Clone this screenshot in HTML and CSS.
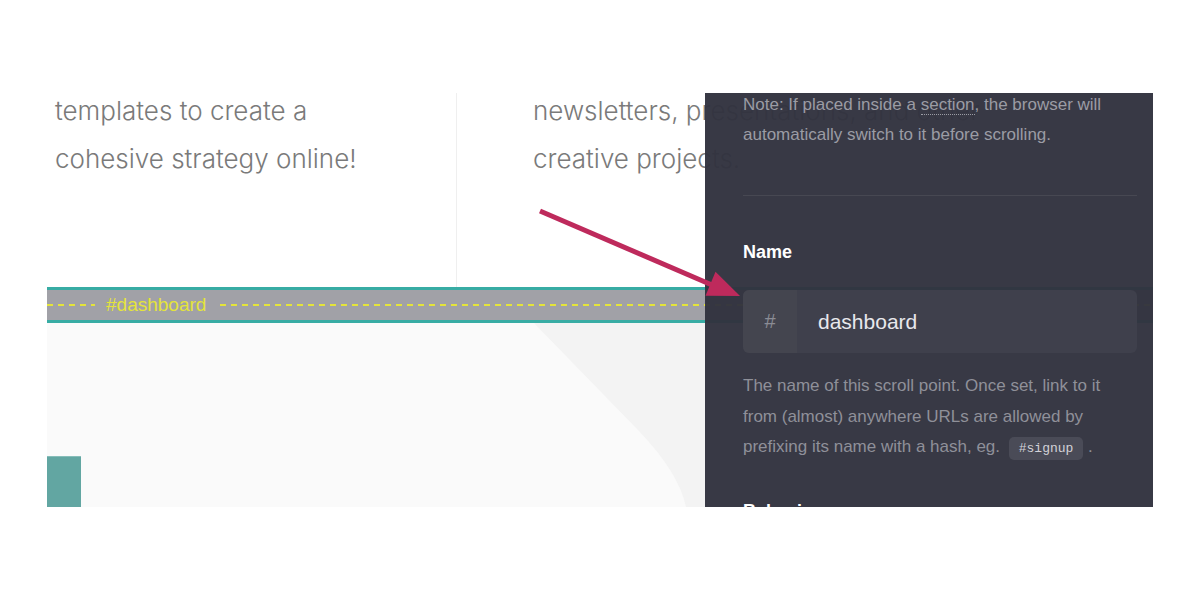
FILE: index.html
```html
<!DOCTYPE html>
<html lang="en">
<head>
  <meta charset="UTF-8" />
  <title>Scroll point settings</title>
  <link rel="stylesheet" href="styles.css">
</head>
<body>

  <div class="shot">
    <div class="preview">
      <div class="features">
        <div class="feature">
          <p>templates to create a<br>cohesive strategy online!</p>
        </div>
        <div class="feature">
          <p>newsletters, presentations, and other<br>creative projects.</p>
        </div>
      </div>

      <div class="scroll-point">
        <span class="dashes dashes-short"></span>
        <span class="scroll-label">#dashboard</span>
        <span class="dashes dashes-long"></span>
      </div>

      <div class="hero">
        <svg class="hero-shape" width="658" height="184" viewBox="0 0 658 184">
          <path d="M487 0 L592 108 Q632 150 639 184 L658 184 L658 0 Z" fill="#f3f3f3" />
        </svg>
        <div class="hero-tab"></div>
      </div>
    </div>

    <aside class="panel">
      <p class="note">Note: If placed inside a <span class="term">section</span>, the browser will automatically switch to it before scrolling.</p>

      <div class="divider"></div>

      <h3 class="field-label">Name</h3>
      <div class="input">
        <span class="input-prefix">#</span>
        <span class="input-value">dashboard</span>
      </div>
      <p class="help">The name of this scroll point. Once set, link to it from (almost) anywhere URLs are allowed by prefixing its name with a hash, eg. <code>#signup</code> .</p>

      <h3 class="field-label field-label-next">Behavior</h3>
    </aside>

    <svg class="arrow" width="1106" height="414" viewBox="0 0 1106 414">
      <line x1="493" y1="118" x2="665" y2="192" stroke="#be2a5c" stroke-width="5" />
      <polygon points="693,203 668.5,178.7 658.5,202.7" fill="#be2a5c" />
    </svg>
  </div>

</body>
</html>
```

FILE: styles.css
```css
:root {
  --teal: #38aca4;
  --bar: #a1a1a7;
  --dash: #e4e43a;
  --panel: rgba(50, 51, 63, 0.97);
  --panel-line: #474852;
  --muted: #9b9ca4;
}

* {
  box-sizing: border-box;
}

body {
  margin: 0;
  background: #fff;
}

.shot {
  position: relative;
  display: grid;
  width: 1106px;
  height: 414px;
  margin: 93px 0 0 47px;
  overflow: hidden;
}

/* website preview */

.preview {
  grid-area: 1 / 1;
  display: flex;
  flex-direction: column;
  overflow: hidden;
}

.features {
  display: flex;
  height: 194px;
  overflow: hidden;
}

.feature {
  flex: none;
  width: 410px;
  padding-left: 8px;
  border-right: 1px solid #efefef;
}

.feature + .feature {
  width: auto;
  padding-left: 76px;
  border-right: none;
}

.feature p {
  margin: -6px 0 0;
  font-family: Inter, "Noto Sans", sans-serif;
  font-weight: 300;
  font-size: 26px;
  line-height: 48px;
  color: #7a7a7a;
  white-space: nowrap;
}

.scroll-point {
  display: flex;
  align-items: center;
  gap: 11px;
  height: 36px;
  background: var(--bar);
  border-top: 3px solid var(--teal);
  border-bottom: 3px solid var(--teal);
}

.dashes {
  height: 2px;
  background: repeating-linear-gradient(90deg, var(--dash) 0 6px, transparent 6px 11px);
}

.dashes-short {
  width: 48px;
}

.dashes-long {
  flex: 1;
  margin-left: 3px;
}

.scroll-label {
  font-family: "Liberation Sans", Arial, sans-serif;
  font-size: 19px;
  color: var(--dash);
}

.hero {
  position: relative;
  display: flex;
  align-items: flex-end;
  flex: 1;
  background: #fafafa;
}

.hero-shape {
  position: absolute;
  top: 0;
  left: 0;
}

.hero-tab {
  position: relative;
  width: 34px;
  height: 51px;
  background: #62a6a2;
  border-top: 1px solid #86bdb9;
}

/* settings panel */

.panel {
  position: relative;
  z-index: 1;
  grid-area: 1 / 1;
  justify-self: end;
  width: 448px;
  height: 414px;
  padding: 0 16px 0 38px;
  background: var(--panel);
  font-family: "Liberation Sans", Arial, sans-serif;
  overflow: hidden;
}

.note {
  margin: -3px 0 0;
  font-size: 17px;
  line-height: 30px;
  color: var(--muted);
}

.term {
  border-bottom: 1px dotted var(--muted);
}

.divider {
  margin-top: 45px;
  border-top: 1px solid var(--panel-line);
}

.field-label {
  margin: 44px 0 0;
  font-size: 18px;
  line-height: 24px;
  font-weight: bold;
  color: #fff;
}

.field-label-next {
  margin-top: 34px;
}

.input {
  display: flex;
  height: 63px;
  margin-top: 26px;
  border-radius: 6px;
  background: #3f404c;
  overflow: hidden;
}

.input-prefix {
  display: flex;
  align-items: center;
  justify-content: center;
  width: 54px;
  background: #44454f;
  font-size: 20px;
  color: #8b8c95;
}

.input-value {
  display: flex;
  align-items: center;
  padding-left: 21px;
  font-size: 21px;
  color: #e8e8ec;
}

.help {
  margin: 18px 0 0;
  font-size: 17px;
  line-height: 30.5px;
  color: #8f9099;
}

.help code {
  margin-left: 4px;
  padding: 4px 10px;
  border-radius: 5px;
  background: #4a4b57;
  font-family: "Liberation Mono", "Courier New", monospace;
  font-size: 13px;
  color: #d2d2d8;
}

.arrow {
  position: absolute;
  z-index: 2;
  top: 0;
  left: 0;
  pointer-events: none;
}
```
